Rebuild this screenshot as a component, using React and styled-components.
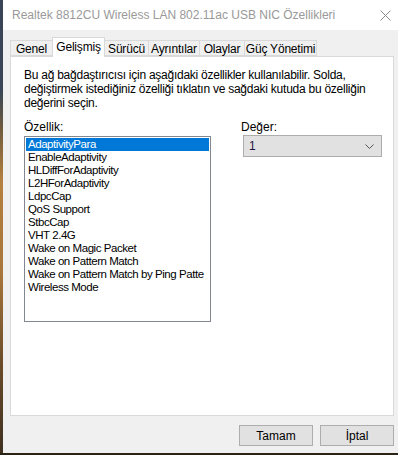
import React from "react";
import styled, { createGlobalStyle } from "styled-components";

const Global = createGlobalStyle`
  html, body { margin: 0; padding: 0; }
  body {
    width: 398px;
    height: 455px;
    overflow: hidden;
    font-family: "Liberation Sans", Arial, sans-serif;
  }
`;

const Desktop = styled.div`
  width: 398px;
  height: 455px;
  box-sizing: border-box;
  padding: 0 0 2px 3px;
  overflow: hidden;
  background:
    linear-gradient(to bottom, transparent 0, transparent 453px, #2b2316 453px),
    linear-gradient(to bottom, #3a4657 0%, #3a4657 20%, #6e5a3e 28%, #b5803f 40%, #a8763a 60%, #6a4c2a 80%, #3e3020 100%);
`;

const Window = styled.div`
  width: 395px;
  height: 453px;
  background: #f0f0f0;
  display: flex;
  flex-direction: column;
`;

const TitleBar = styled.div`
  height: 30px;
  flex: none;
  background: #ffffff;
  display: flex;
  align-items: center;
  padding-left: 9px;
  padding-right: 7px;
  font-size: 12px;
  color: #999999;
  white-space: nowrap;
`;

const TitleText = styled.div`
  flex: 1;
`;

const CloseIcon = styled.svg`
  width: 11px;
  height: 11px;
  flex: none;
`;

const TabRow = styled.div`
  display: flex;
  align-items: flex-end;
  height: 19px;
  margin-top: 7px;
  padding-left: 7px;
`;

const Tab = styled.div`
  box-sizing: border-box;
  width: ${(p) => p.$w}px;
  height: ${(p) => (p.$active ? 20 : 16)}px;
  margin-left: ${(p) => (p.$first ? 0 : -1)}px;
  margin-bottom: ${(p) => (p.$active ? -1 : 0)}px;
  position: relative;
  z-index: ${(p) => (p.$active ? 2 : 1)};
  border: 1px solid #d9d9d9;
  border-bottom: ${(p) => (p.$active ? "none" : "1px solid #d9d9d9")};
  background: ${(p) => (p.$active ? "#ffffff" : "#f0f0f0")};
  font-size: 12px;
  color: #000;
  display: flex;
  justify-content: center;
  align-items: ${(p) => (p.$active ? "flex-start" : "center")};
  padding-top: ${(p) => (p.$active ? 2 : 1)}px;
  white-space: nowrap;
  letter-spacing: -0.2px;
`;

const Panel = styled.div`
  box-sizing: border-box;
  margin: 0 4px 0 7px;
  height: 360px;
  background: #ffffff;
  border: 1px solid #d9d9d9;
  padding: 11px 10px 0 13px;
  font-size: 12px;
  color: #000;
`;

const Intro = styled.p`
  margin: 0;
  line-height: 14px;
  white-space: nowrap;
  letter-spacing: -0.25px;
`;

const Columns = styled.div`
  display: grid;
  grid-template-columns: 187px 1fr;
  column-gap: 30px;
  margin-top: 10px;
`;

const Column = styled.div`
  display: flex;
  flex-direction: column;
`;

const Label = styled.div`
  line-height: 14px;
  height: 14px;
  margin-bottom: ${(p) => p.$gap}px;
`;

const ListBox = styled.div`
  box-sizing: border-box;
  width: 187px;
  height: 186px;
  border: 1px solid #828790;
  padding: 1px;
  overflow: hidden;
  background: #fff;
`;

const Item = styled.div`
  height: 13px;
  line-height: 13px;
  font-size: 11.5px;
  letter-spacing: -0.45px;
  padding-left: 2px;
  white-space: nowrap;
  overflow: hidden;
  background: ${(p) => (p.$selected ? "#0078d7" : "transparent")};
  color: ${(p) => (p.$selected ? "#ffffff" : "#000000")};
`;

const Select = styled.div`
  box-sizing: border-box;
  width: 139px;
  height: 22px;
  margin-left: 2px;
  background: #e1e1e1;
  border: 1px solid #adadad;
  display: flex;
  align-items: center;
  justify-content: space-between;
  padding: 0 7px 0 5px;
  font-size: 12px;
  color: #1e1440;
`;

const Chevron = styled.svg`
  width: 9px;
  height: 5px;
`;

const ButtonRow = styled.div`
  display: flex;
  justify-content: flex-end;
  gap: 7px;
  margin: 9px 4px 0 0;
`;

const Button = styled.div`
  box-sizing: border-box;
  width: 74px;
  height: 21px;
  background: #e1e1e1;
  border: 1px solid #adadad;
  display: flex;
  align-items: center;
  justify-content: center;
  font-size: 12px;
  color: #000;
`;

const tabs = [
  { label: "Genel", w: 43 },
  { label: "Gelişmiş", w: 53, active: true },
  { label: "Sürücü", w: 45 },
  { label: "Ayrıntılar", w: 52 },
  { label: "Olaylar", w: 46 },
  { label: "Güç Yönetimi", w: 73 },
];

const items = [
  "AdaptivityPara",
  "EnableAdaptivity",
  "HLDiffForAdaptivity",
  "L2HForAdaptivity",
  "LdpcCap",
  "QoS Support",
  "StbcCap",
  "VHT 2.4G",
  "Wake on Magic Packet",
  "Wake on Pattern Match",
  "Wake on Pattern Match by Ping Patte",
  "Wireless Mode",
];

export default function App() {
  return (
    <>
      <Global />
      <Desktop>
        <Window>
          <TitleBar>
            <TitleText>Realtek 8812CU Wireless LAN 802.11ac USB NIC Özellikleri</TitleText>
            <CloseIcon viewBox="0 0 11 11">
              <path d="M0.5 0.5 L10.5 10.5 M10.5 0.5 L0.5 10.5" stroke="#8a8a8a" strokeWidth="1" fill="none" />
            </CloseIcon>
          </TitleBar>
          <TabRow>
            {tabs.map((t, i) => (
              <Tab key={t.label} $w={t.w} $active={t.active} $first={i === 0}>
                {t.label}
              </Tab>
            ))}
          </TabRow>
          <Panel>
            <Intro>
              Bu ağ bağdaştırıcısı için aşağıdaki özellikler kullanılabilir. Solda,
              <br />
              değiştirmek istediğiniz özelliği tıklatın ve sağdaki kutuda bu özelliğin
              <br />
              değerini seçin.
            </Intro>
            <Columns>
              <Column>
                <Label $gap={2}>Özellik:</Label>
                <ListBox>
                  {items.map((it, i) => (
                    <Item key={it} $selected={i === 0}>
                      {it}
                    </Item>
                  ))}
                </ListBox>
              </Column>
              <Column>
                <Label $gap={1}>Değer:</Label>
                <Select>
                  <span>1</span>
                  <Chevron viewBox="0 0 9 5">
                    <path d="M0.5 0.5 L4.5 4.5 L8.5 0.5" stroke="#555" strokeWidth="1" fill="none" />
                  </Chevron>
                </Select>
              </Column>
            </Columns>
          </Panel>
          <ButtonRow>
            <Button>Tamam</Button>
            <Button>İptal</Button>
          </ButtonRow>
        </Window>
      </Desktop>
    </>
  );
}
